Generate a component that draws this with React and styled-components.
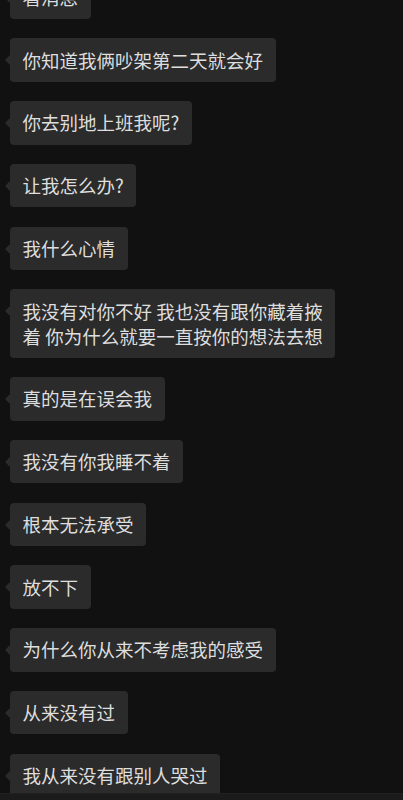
import React from "react";
import styled, { createGlobalStyle } from "styled-components";

const GlobalStyle = createGlobalStyle`
  html, body {
    margin: 0;
    padding: 0;
    background: #111111;
  }
  body {
    font-family: "Noto Sans CJK SC", "Noto Sans", sans-serif;
  }
`;

const Screen = styled.div`
  width: 403px;
  height: 800px;
  display: flex;
  flex-direction: column;
  background: #111111;
  overflow: hidden;
`;

const Thread = styled.div`
  height: 793px;
  overflow: hidden;
  display: flex;
  flex-direction: column;
  align-items: flex-start;
  gap: 19.25px;
  padding-left: 10px;
`;

const Bubble = styled.div`
  position: relative;
  flex-shrink: 0;
  margin-top: ${(p) => (p.$first ? "-24.5px" : "0")};
  padding: 9.25px 12.5px 9.25px 12.5px;
  background: #2b2b2b;
  border-radius: 4px;
  color: #dedede;
  font-size: 18.5px;
  line-height: 25px;
  white-space: nowrap;

  &::before {
    content: "";
    position: absolute;
    left: -5px;
    top: 17px;
    border-style: solid;
    border-width: 5px 5px 5px 0;
    border-color: transparent #2b2b2b transparent transparent;
  }
`;

const InputBar = styled.div`
  flex: 1;
  background: #1b1b1b;
  border-top: 1px solid #202020;
`;

const messages = [
  ["看消息"],
  ["你知道我俩吵架第二天就会好"],
  ["你去别地上班我呢?"],
  ["让我怎么办?"],
  ["我什么心情"],
  ["我没有对你不好 我也没有跟你藏着掖", "着 你为什么就要一直按你的想法去想"],
  ["真的是在误会我"],
  ["我没有你我睡不着"],
  ["根本无法承受"],
  ["放不下"],
  ["为什么你从来不考虑我的感受"],
  ["从来没有过"],
  ["我从来没有跟别人哭过"],
];

const App = () => {
  return (
    <Screen>
      <GlobalStyle />
      <Thread>
        {messages.map((lines, index) => (
          <Bubble key={index} $first={index === 0}>
            {lines.map((line, i) => (
              <React.Fragment key={i}>
                {i > 0 && <br />}
                {line}
              </React.Fragment>
            ))}
          </Bubble>
        ))}
      </Thread>
      <InputBar />
    </Screen>
  );
};

export default App;
